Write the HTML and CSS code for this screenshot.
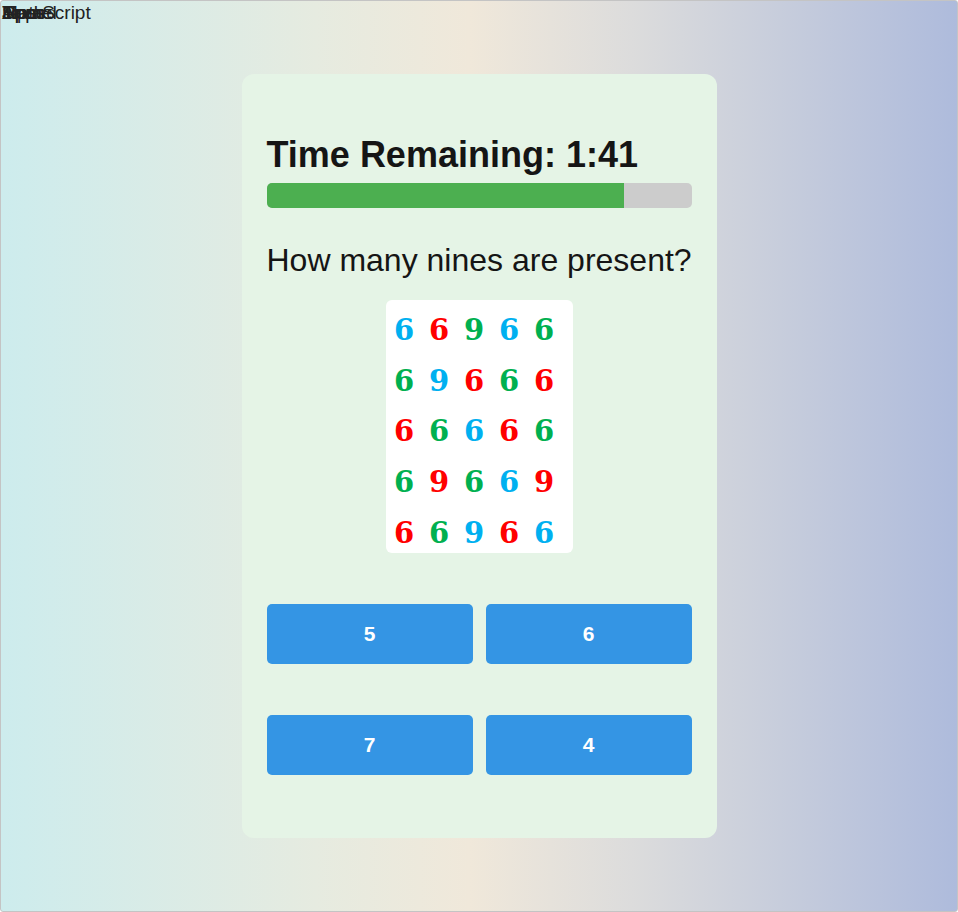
FILE: index.html
```html
<!DOCTYPE html>
<html lang="en">
<head>
<meta charset="utf-8">
<title>Nines Quiz</title>
<link rel="stylesheet" href="styles.css">
</head>
<body>
<div class="frame">
  <nav class="nav">
    <a class="nav-link">Home</a>
    <a class="nav-link">Speed</a>
    <a class="nav-link">Tips</a>
    <a class="nav-link">Math</a>
    <a class="nav-link">Apps</a>
    <a class="nav-link">JavaScript</a>
  </nav>
  <main class="card">
    <h1 class="timer">Time Remaining: 1:41</h1>
    <div class="progress"><div class="progress-fill" style="width:84.2%"></div></div>
    <p class="question">How many nines are present?</p>
    <div class="puzzle">
      <span class="d b">6</span><span class="d r">6</span><span class="d g">9</span><span class="d b">6</span><span class="d g">6</span>
      <span class="d g">6</span><span class="d b">9</span><span class="d r">6</span><span class="d g">6</span><span class="d r">6</span>
      <span class="d r">6</span><span class="d g">6</span><span class="d b">6</span><span class="d r">6</span><span class="d g">6</span>
      <span class="d g">6</span><span class="d r">9</span><span class="d g">6</span><span class="d b">6</span><span class="d r">9</span>
      <span class="d r">6</span><span class="d g">6</span><span class="d b">9</span><span class="d r">6</span><span class="d b">6</span>
    </div>
    <div class="answers">
      <button class="answer">5</button>
      <button class="answer">6</button>
      <button class="answer">7</button>
      <button class="answer">4</button>
    </div>
  </main>
</div>
</body>
</html>
```

FILE: styles.css
```css
* { box-sizing: border-box; }
html, body { margin: 0; padding: 0; }
body {
  font-family: "Liberation Sans", Arial, sans-serif;
  color: #1a1a1a;
}
.frame {
  position: relative;
  width: 958px;
  height: 912px;
  border: 1px solid #c4c4c4;
  border-radius: 3px;
  background: linear-gradient(to right, #cdeced 0%, #e6ebe0 33%, #f0e8da 49%, #dcdcdc 66%, #aebbdc 100%);
  display: flex;
  align-items: center;
  justify-content: center;
}
.nav { position: absolute; left: 0; top: 0; }
.nav-link {
  position: absolute;
  left: 1px;
  top: 1px;
  font-size: 19px;
  line-height: 22px;
  color: #222;
  white-space: nowrap;
}
.card {
  width: 475px;
  height: 764px;
  background: #e5f4e6;
  border-radius: 12px;
  padding: 60px 25px 0 25px;
}
.timer {
  margin: 0;
  font-size: 36px;
  line-height: 41px;
  font-weight: bold;
  color: #151515;
  white-space: nowrap;
}
.progress {
  margin-top: 8px;
  height: 25px;
  background: #cccccc;
  border-radius: 5px;
  overflow: hidden;
}
.progress-fill { height: 100%; background: #4caf50; }
.question {
  margin: 34px 0 0 0;
  font-size: 32px;
  line-height: 37px;
  color: #151515;
  white-space: nowrap;
}
.puzzle {
  margin: 21px auto 0 auto;
  width: 187px;
  height: 253px;
  background: #ffffff;
  border-radius: 6px;
  padding: 5px 0 0 1px;
  display: grid;
  grid-template-columns: repeat(5, 35px);
  grid-template-rows: repeat(5, 50.6px);
}
.d {
  font-family: "DejaVu Serif", "Liberation Serif", serif;
  font-weight: bold;
  font-size: 29px;
  display: flex;
  align-items: center;
  justify-content: center;
}
.b { color: #00b0f0; }
.r { color: #ff0000; }
.g { color: #00b050; }
.answers {
  margin-top: 51px;
  display: grid;
  grid-template-columns: 1fr 1fr;
  column-gap: 13px;
  row-gap: 51px;
}
.answer {
  height: 60px;
  border: none;
  border-radius: 5px;
  background: #3495e4;
  color: #ffffff;
  font-family: "Liberation Sans", Arial, sans-serif;
  font-weight: bold;
  font-size: 21px;
}
```
